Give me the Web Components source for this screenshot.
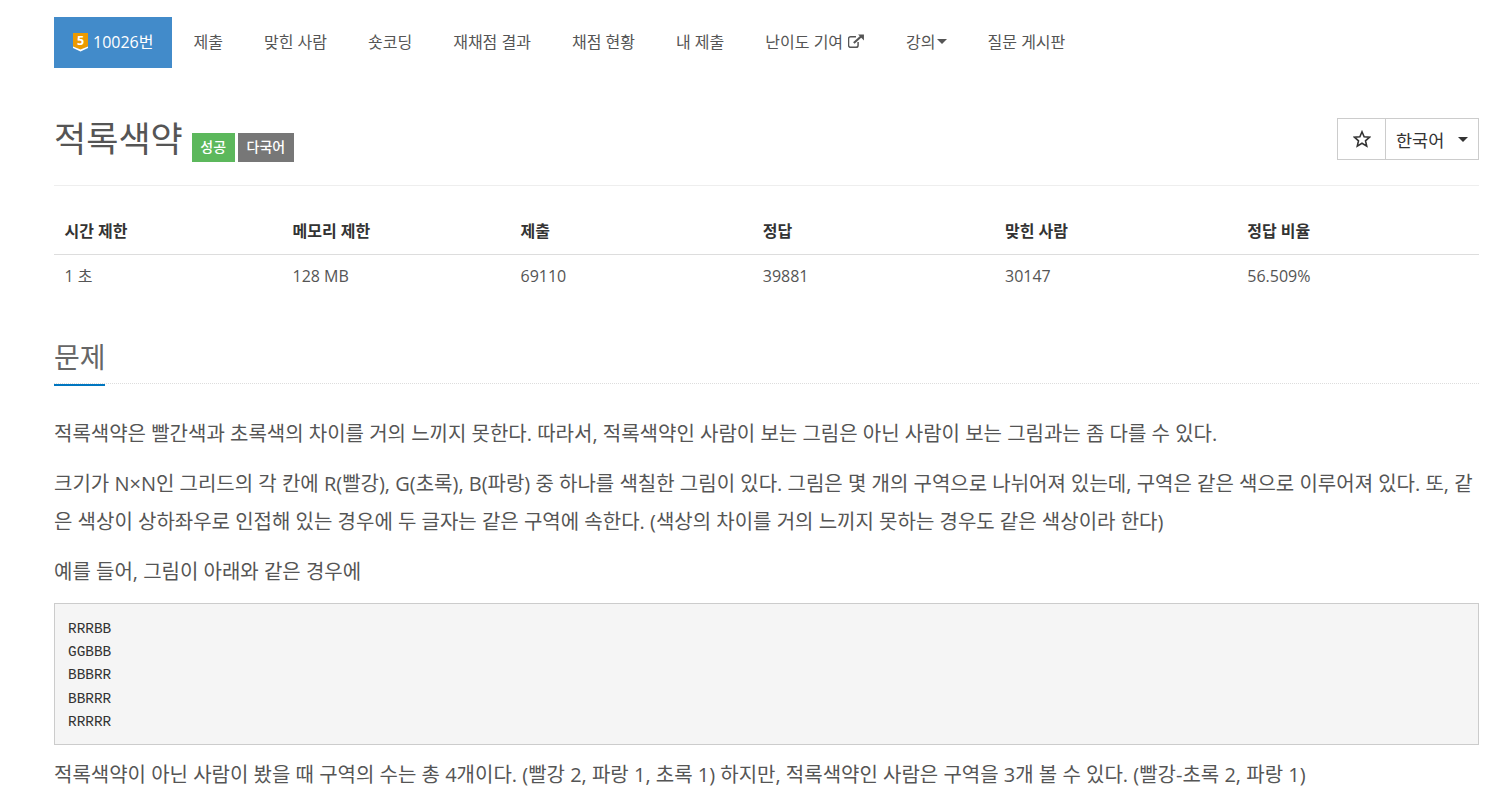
<!DOCTYPE html>
<html lang="ko">
<head>
<meta charset="utf-8">
<title>적록색약</title>
<style>
  html, body { margin: 0; background: #fff; }
  body { font-family: "Open Sans", "Noto Sans CJK KR", sans-serif; color: #555; overflow: hidden; height: 794px; }
  main { display: block; padding: 17px 26px 0 54px; }
</style>
</head>
<body>
<main>
  <problem-nav></problem-nav>
  <problem-title></problem-title>
  <problem-stats></problem-stats>
  <problem-section heading="문제">
    <p>적록색약은 빨간색과 초록색의 차이를 거의 느끼지 못한다. 따라서, 적록색약인 사람이 보는 그림은 아닌 사람이 보는 그림과는 좀 다를 수 있다.</p>
    <p>크기가 N×N인 그리드의 각 칸에 R(빨강), G(초록), B(파랑) 중 하나를 색칠한 그림이 있다. 그림은 몇 개의 구역으로 나뉘어져 있는데, 구역은 같은 색으로 이루어져 있다. 또, 같은 색상이 상하좌우로 인접해 있는 경우에 두 글자는 같은 구역에 속한다. (색상의 차이를 거의 느끼지 못하는 경우도 같은 색상이라 한다)</p>
    <p>예를 들어, 그림이 아래와 같은 경우에</p>
    <sample-block>RRRBB
GGBBB
BBBRR
BBRRR
RRRRR</sample-block>
    <p>적록색약이 아닌 사람이 봤을 때 구역의 수는 총 4개이다. (빨강 2, 파랑 1, 초록 1) 하지만, 적록색약인 사람은 구역을 3개 볼 수 있다. (빨강-초록 2, 파랑 1)</p>
  </problem-section>
</main>
<script>
class ProblemNav extends HTMLElement {
  connectedCallback() {
    this.attachShadow({ mode: 'open' });
    const links = ['제출', '맞힌 사람', '숏코딩', '재채점 결과', '채점 현황', '내 제출'];
    this.shadowRoot.innerHTML = `
      <style>
        :host { display: block; font-size: 16px; }
        nav { display: flex; height: 51px; align-items: stretch; }
        a { display: flex; align-items: center; padding: 0 20.5px 2px; color: #555; white-space: nowrap; line-height: 20px; }
        a.active { background: #428bca; color: #fff; padding: 0 18px 2px 19px; gap: 4px; width: 118px; box-sizing: border-box; margin-right: 1px; }
        svg { display: block; flex: none; }
        .ext { margin-left: 5px; }
        .caret { margin-left: 1px; }
      </style>
      <nav>
        <a class="active">
          <svg width="16" height="20" viewBox="0 0 16 20">
            <path d="M0 1h15v13.5l-7.5 3.5L0 14.5z" fill="#ec9a00"/>
            <path d="M0 14.5l7.5 3 7.5-3v1.5l-7.5 3.5L0 16z" fill="#fff"/>
            <text x="7.5" y="13" font-size="12.5" font-weight="700" fill="#fff" text-anchor="middle" font-family="Open Sans">5</text>
          </svg>
          10026번
        </a>
        ${links.map(l => `<a>${l}</a>`).join('')}
        <a>난이도 기여
          <svg class="ext" width="17" height="15" viewBox="0 0 16 14" fill="none" stroke="#555">
            <path d="M9.5 7.5v3a2 2 0 0 1-2 2h-5a2 2 0 0 1-2-2v-6a2 2 0 0 1 2-2h5" stroke-width="1.4"/>
            <path d="M5.5 8.5L13 1.5" stroke-width="2"/>
            <path d="M9.5 0.5h5.5v5.5z" fill="#555" stroke="none"/>
          </svg>
        </a>
        <a>강의<svg class="caret" width="10" height="5" viewBox="0 0 10 5"><path d="M0 0h10L5 5z" fill="#555"/></svg></a>
        <a>질문 게시판</a>
      </nav>`;
  }
}

class ProblemTitle extends HTMLElement {
  connectedCallback() {
    this.attachShadow({ mode: 'open' });
    this.shadowRoot.innerHTML = `
      <style>
        :host { display: flex; justify-content: space-between; align-items: flex-start; margin-top: 50px; padding-bottom: 25px; border-bottom: 1px solid #eee; box-sizing: content-box; height: 42px; }
        .left { display: flex; align-items: flex-start; }
        h1 { margin: 0; font-size: 35px; font-weight: 400; line-height: 42px; color: #555; }
        .label { display: block; margin-top: 15px; height: 29px; line-height: 28px; padding: 0 9px; font-size: 14px; font-weight: 500; color: #fff; white-space: nowrap; }
        .ok { background: #5cb85c; margin-left: 9px; padding: 0 8.5px; }
        .lang { background: #777; margin-left: 3px; }
        .group { display: flex; height: 42px; box-sizing: border-box; border: 1px solid #ccc; color: #333; font-size: 17.5px; align-items: stretch; background: #fff; }
        .star { width: 47px; display: flex; align-items: center; justify-content: center; border-right: 1px solid #ccc; }
        .select { width: 92px; display: flex; align-items: center; padding-left: 10px; box-sizing: border-box; gap: 14px; }
      </style>
      <div class="left">
        <h1>적록색약</h1>
        <span class="label ok">성공</span>
        <span class="label lang">다국어</span>
      </div>
      <div class="group">
        <div class="star">
          <svg width="18" height="18" viewBox="0 0 16 16"><path d="M8 1.6l1.9 4.4 4.8.4-3.6 3.2 1.1 4.7L8 11.8l-4.2 2.5 1.1-4.7-3.6-3.2 4.8-.4z" fill="none" stroke="#333" stroke-width="1.4"/></svg>
        </div>
        <div class="select">
          <span>한국어</span>
          <svg width="10" height="5" viewBox="0 0 10 5"><path d="M0 0h10L5 5z" fill="#333"/></svg>
        </div>
      </div>`;
  }
}

class ProblemStats extends HTMLElement {
  connectedCallback() {
    this.attachShadow({ mode: 'open' });
    const rows = [
      ['시간 제한', '1 초'], ['메모리 제한', '128 MB'], ['제출', '69110'],
      ['정답', '39881'], ['맞힌 사람', '30147'], ['정답 비율', '56.509%']
    ];
    this.shadowRoot.innerHTML = `
      <style>
        :host { display: grid; grid-template-columns: 16% 16% 17% 17% 17% 17%; font-size: 16px; line-height: 20px; margin-top: 25px; }
        .h, .d { padding: 0 10.5px; }
        .h { font-weight: 700; color: #333; padding-top: 10px; padding-bottom: 13px; border-bottom: 1px solid #ddd; }
        .d { padding-top: 11px; color: #555; }
      </style>
      ${rows.map(r => `<div class="h">${r[0]}</div>`).join('')}
      ${rows.map(r => `<div class="d">${r[1]}</div>`).join('')}`;
  }
}

class ProblemSection extends HTMLElement {
  connectedCallback() {
    this.attachShadow({ mode: 'open' });
    this.shadowRoot.innerHTML = `
      <style>
        :host { display: block; margin-top: 53px; }
        .head { border-bottom: 1px dotted #ddd; height: 44px; }
        h2 { margin: 0; font-size: 28px; font-weight: 400; line-height: 36px; color: #666; border-bottom: 2px solid #0076c0; width: 51px; height: 45px; white-space: nowrap; }
        ::slotted(p) { margin: 0 0 12px; font-size: 20px; line-height: 38px; color: #555; }
        .body { margin-top: 31px; }
      </style>
      <div class="head"><h2>${this.getAttribute('heading')}</h2></div>
      <div class="body"><slot></slot></div>`;
  }
}

class SampleBlock extends HTMLElement {
  connectedCallback() {
    const text = this.textContent;
    this.textContent = '';
    this.attachShadow({ mode: 'open' });
    this.shadowRoot.innerHTML = `
      <style>
        :host { display: block; margin: 0 0 11px; }
        pre { margin: 0; padding: 14px 13px 10px; background: #f5f5f5; border: 1px solid #ccc; font-family: "Liberation Mono", monospace; font-size: 14.4px; line-height: 23.2px; color: #333; }
      </style>
      <pre></pre>`;
    this.shadowRoot.querySelector('pre').textContent = text;
  }
}

customElements.define('problem-nav', ProblemNav);
customElements.define('problem-title', ProblemTitle);
customElements.define('problem-stats', ProblemStats);
customElements.define('problem-section', ProblemSection);
customElements.define('sample-block', SampleBlock);
</script>
</body>
</html>
